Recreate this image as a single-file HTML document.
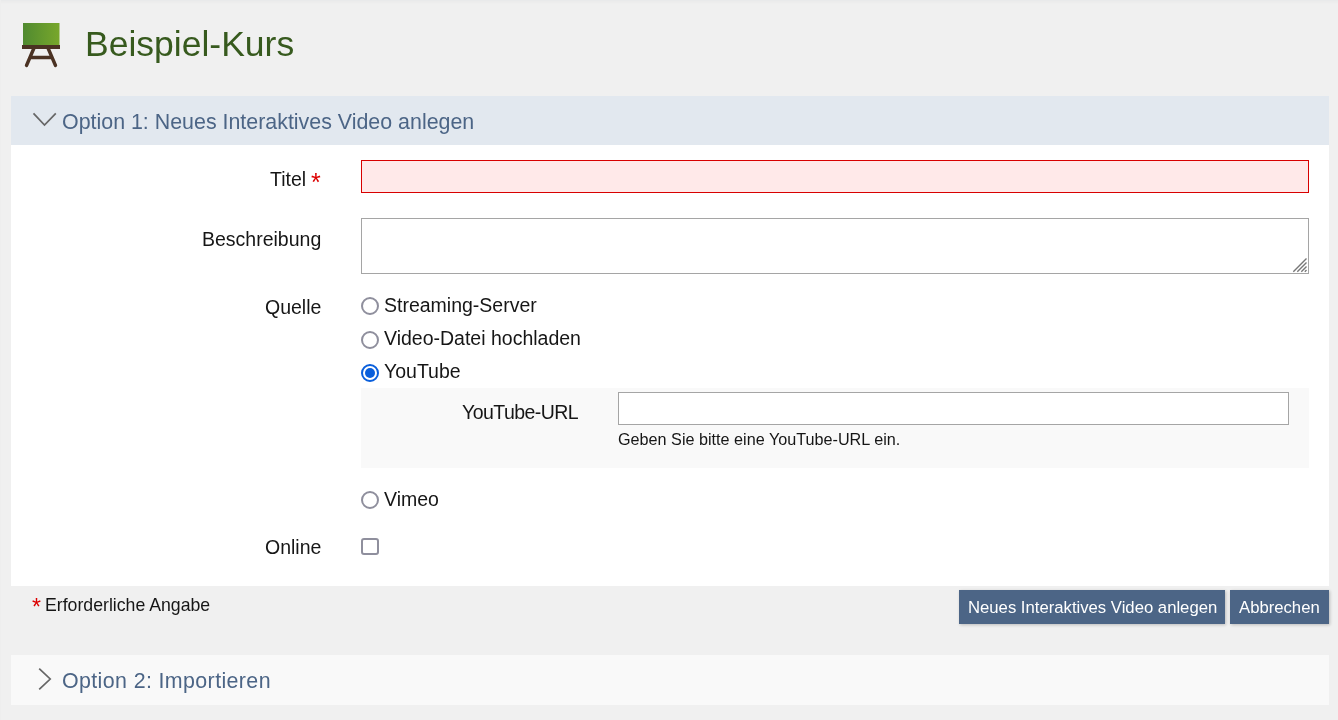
<!DOCTYPE html>
<html><head><meta charset="utf-8">
<style>
html,body{margin:0;padding:0;}
body{width:1338px;height:720px;background:#f0f0f0;position:relative;overflow:hidden;font-family:"Liberation Sans",sans-serif;color:#161616;}
.abs{position:absolute;white-space:nowrap;line-height:1;will-change:transform;}
.topshade{position:absolute;left:0;top:0;width:1338px;height:1px;background:#e9eaeb;box-shadow:0 1px 0 #ececec,0 2px 0 #ededed,0 3px 0 #efefef;}
.leftshade{position:absolute;left:0;top:0;width:1px;height:720px;background:#eeeeee;}
.title{left:85.4px;top:27.4px;font-size:35.5px;letter-spacing:0;color:#375a1e;}
.panel{position:absolute;left:11px;width:1318px;}
.p1h{top:96px;height:49px;background:#e2e8ef;}
.p1b{top:145px;height:441px;background:#fff;}
.p2{top:655px;height:50px;background:#f9f9f9;}
.htxt{font-size:21.4px;color:#4c6586;}
.lbl{font-size:19.5px;text-align:right;}
.req{color:#dc0000;}
.inp{position:absolute;box-sizing:border-box;}
.rad{position:absolute;width:18px;height:18px;box-sizing:border-box;border:2px solid #8f8f9d;border-radius:50%;background:#fff;}
.btn{position:absolute;top:590px;height:34px;background:#4c6586;color:#fff;font-size:16.7px;box-shadow:1px 1px 3px rgba(0,0,0,.22);}
</style></head>
<body>
<div class="topshade"></div><div class="leftshade"></div>
<!-- icon -->
<svg class="abs" style="left:0;top:0" width="80" height="80" viewBox="0 0 80 80">
  <defs><linearGradient id="g" x1="0" x2="1" y1="0" y2="0"><stop offset="0" stop-color="#508a30"/><stop offset="1" stop-color="#78a72b"/></linearGradient></defs>
  <rect x="23" y="23" width="36.5" height="22.5" fill="url(#g)"/>
  <rect x="22" y="45" width="38" height="4" fill="#4b3223"/>
  <path d="M34 48 L26.5 65.5 M48 48 L55.5 65.5 M30 57.5 L52 57.5" stroke="#4b3223" stroke-width="3.4" stroke-linecap="round" fill="none"/>
</svg>
<div class="abs title">Beispiel-Kurs</div>

<div class="panel p1h"></div>
<svg class="abs" style="left:30px;top:108px" width="30" height="22" viewBox="0 0 30 22">
  <path d="M3.5 5.3 L14.5 17 L25.8 5.3" stroke="#666" stroke-width="1.7" fill="none"/>
</svg>
<div class="abs htxt" style="left:62px;top:112px">Option 1: Neues Interaktives Video anlegen</div>

<div class="panel p1b"></div>

<div class="abs lbl" style="right:1031.5px;top:170px">Titel</div><div class="abs req" style="left:311px;top:170px;font-size:25px">*</div>
<div class="inp" style="left:361px;top:160px;width:948px;height:33px;border:1px solid #d80000;background:#ffe9e9"></div>

<div class="abs lbl" style="right:1017px;top:230px">Beschreibung</div>
<textarea class="inp" style="left:361px;top:218px;width:948px;height:56px;border:1px solid #a5a5a5;background:#fff;margin:0;padding:0;outline:none;resize:none"></textarea>
<svg class="abs" style="left:1288px;top:252px" width="24" height="24" viewBox="1288 252 24 24"><path d="M1293.3 271.8 L1306.5 258.6 M1297.3 271.8 L1306.5 262.6 M1301.3 271.8 L1306.5 266.6 M1304.8 271.8 L1306.5 270.1" stroke="#777" stroke-width="1.4" fill="none"/></svg>

<div class="abs lbl" style="right:1017px;top:298px">Quelle</div>

<div class="rad" style="left:361px;top:297px"></div>
<div class="abs lbl" style="left:384px;top:296px;text-align:left">Streaming-Server</div>
<div class="rad" style="left:361px;top:331px"></div>
<div class="abs lbl" style="left:384px;top:329px;text-align:left">Video-Datei hochladen</div>
<div class="rad" style="left:361px;top:364px;border-color:#0a5fdc"><div style="position:absolute;left:2px;top:2px;width:10px;height:10px;border-radius:50%;background:#0a5fdc"></div></div>
<div class="abs lbl" style="left:384px;top:362px;text-align:left">YouTube</div>

<div class="inp" style="left:361px;top:388px;width:948px;height:80px;background:#f9f9f9"></div>
<div class="abs lbl" style="right:760px;top:402.5px;letter-spacing:-0.55px">YouTube-URL</div>
<div class="inp" style="left:618px;top:392px;width:671px;height:33px;border:1px solid #a5a5a5;background:#fff"></div>
<div class="abs" style="left:618px;top:430.5px;font-size:16.2px">Geben Sie bitte eine YouTube-URL ein.</div>

<div class="rad" style="left:361px;top:491px"></div>
<div class="abs lbl" style="left:384px;top:489.5px;text-align:left">Vimeo</div>

<div class="abs lbl" style="right:1017px;top:538px">Online</div>
<div class="inp" style="left:361px;top:537.5px;width:17.5px;height:17.5px;border:2px solid #8f8f9d;border-radius:3px;background:#fff"></div>

<div class="abs req" style="left:31.7px;top:595.5px;font-size:23px">*</div><div class="abs" style="left:45.3px;top:596.6px;font-size:17.7px">Erforderliche Angabe</div>
<div class="btn" style="left:959px;width:266px"><div class="abs" style="left:9px;top:10px">Neues Interaktives Video anlegen</div></div>
<div class="btn" style="left:1230px;width:99px"><div class="abs" style="left:9px;top:10px">Abbrechen</div></div>

<div class="panel p2"></div>
<svg class="abs" style="left:30px;top:660px" width="30" height="40" viewBox="30 660 30 40">
  <path d="M39.2 668.6 L50.2 679 L39.2 689.4" stroke="#666" stroke-width="1.7" fill="none"/>
</svg>
<div class="abs htxt" style="left:62px;top:671px;letter-spacing:0.38px">Option 2: Importieren</div>
</body></html>
